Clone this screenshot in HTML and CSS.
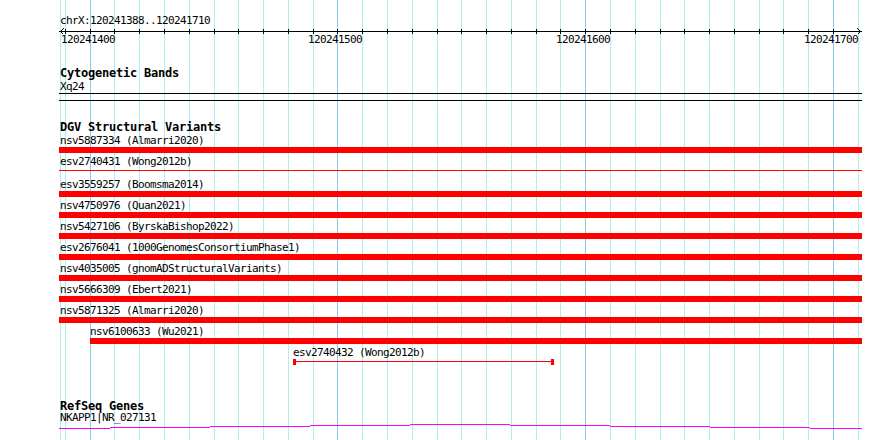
FILE: index.html
```html
<!DOCTYPE html>
<html>
<head>
  <meta charset="UTF-8">
  <title>chrX:120241388..120241710</title>
  <link rel="stylesheet" href="styles.css">
</head>
<body>

<div class="panel">

  <!-- grid lines every 10 bp, darker every 100 bp -->
  <svg class="grid" width="890" height="440" shape-rendering="crispEdges">
    <g fill="#afeeee">
      <rect x="60" y="0" width="1" height="440"/>
      <rect x="65" y="0" width="1" height="440"/>
      <rect x="114" y="0" width="1" height="440"/>
      <rect x="139" y="0" width="1" height="440"/>
      <rect x="164" y="0" width="1" height="440"/>
      <rect x="189" y="0" width="1" height="440"/>
      <rect x="214" y="0" width="1" height="440"/>
      <rect x="238" y="0" width="1" height="440"/>
      <rect x="263" y="0" width="1" height="440"/>
      <rect x="288" y="0" width="1" height="440"/>
      <rect x="313" y="0" width="1" height="440"/>
      <rect x="362" y="0" width="1" height="440"/>
      <rect x="387" y="0" width="1" height="440"/>
      <rect x="412" y="0" width="1" height="440"/>
      <rect x="437" y="0" width="1" height="440"/>
      <rect x="461" y="0" width="1" height="440"/>
      <rect x="486" y="0" width="1" height="440"/>
      <rect x="511" y="0" width="1" height="440"/>
      <rect x="536" y="0" width="1" height="440"/>
      <rect x="560" y="0" width="1" height="440"/>
      <rect x="610" y="0" width="1" height="440"/>
      <rect x="635" y="0" width="1" height="440"/>
      <rect x="660" y="0" width="1" height="440"/>
      <rect x="684" y="0" width="1" height="440"/>
      <rect x="709" y="0" width="1" height="440"/>
      <rect x="734" y="0" width="1" height="440"/>
      <rect x="759" y="0" width="1" height="440"/>
      <rect x="783" y="0" width="1" height="440"/>
      <rect x="808" y="0" width="1" height="440"/>
      <rect x="858" y="0" width="1" height="440"/>
    </g>
    <g fill="#87ceeb">
      <rect x="90" y="0" width="1" height="440"/>
      <rect x="337" y="0" width="1" height="440"/>
      <rect x="585" y="0" width="1" height="440"/>
      <rect x="833" y="0" width="1" height="440"/>
    </g>
  </svg>

  <div class="tracks">

    <!-- ruler -->
    <div class="label">chrX:120241388..120241710</div>
    <svg class="ruler" width="803" height="8" shape-rendering="crispEdges">
      <rect x="0" y="4" width="803" height="1" fill="#000"/>
      <g fill="#000">
        <rect x="6" y="2" width="1" height="5"/>
        <rect x="31" y="2" width="1" height="5"/>
        <rect x="55" y="2" width="1" height="5"/>
        <rect x="80" y="2" width="1" height="5"/>
        <rect x="105" y="2" width="1" height="5"/>
        <rect x="130" y="2" width="1" height="5"/>
        <rect x="155" y="2" width="1" height="5"/>
        <rect x="179" y="2" width="1" height="5"/>
        <rect x="204" y="2" width="1" height="5"/>
        <rect x="229" y="2" width="1" height="5"/>
        <rect x="254" y="2" width="1" height="5"/>
        <rect x="278" y="2" width="1" height="5"/>
        <rect x="303" y="2" width="1" height="5"/>
        <rect x="328" y="2" width="1" height="5"/>
        <rect x="353" y="2" width="1" height="5"/>
        <rect x="378" y="2" width="1" height="5"/>
        <rect x="402" y="2" width="1" height="5"/>
        <rect x="427" y="2" width="1" height="5"/>
        <rect x="452" y="2" width="1" height="5"/>
        <rect x="477" y="2" width="1" height="5"/>
        <rect x="501" y="2" width="1" height="5"/>
        <rect x="526" y="2" width="1" height="5"/>
        <rect x="551" y="2" width="1" height="5"/>
        <rect x="576" y="2" width="1" height="5"/>
        <rect x="601" y="2" width="1" height="5"/>
        <rect x="625" y="2" width="1" height="5"/>
        <rect x="650" y="2" width="1" height="5"/>
        <rect x="675" y="2" width="1" height="5"/>
        <rect x="700" y="2" width="1" height="5"/>
        <rect x="724" y="2" width="1" height="5"/>
        <rect x="749" y="2" width="1" height="5"/>
        <rect x="774" y="2" width="1" height="5"/>
      </g>
      <path d="M4.5 1.5 L1.5 4.5 L4.5 7.5" fill="none" stroke="#000" stroke-width="1"/>
      <path d="M798.5 1.5 L801.5 4.5 L798.5 7.5" fill="none" stroke="#000" stroke-width="1"/>
    </svg>
    <div class="ticks label">
      <span style="left:2px">120241400</span>
      <span style="left:249px">120241500</span>
      <span style="left:497px">120241600</span>
      <span style="left:745px">120241700</span>
    </div>

    <!-- cytogenetic bands -->
    <div class="title cyto-title">Cytogenetic Bands</div>
    <div class="label cyto-label">Xq24</div>
    <div class="band"></div>

    <!-- DGV -->
    <div class="title dgv-title">DGV Structural Variants</div>

    <div class="row">
      <div class="label">nsv5887334 (Almarri2020)</div>
      <div class="bar"></div>
    </div>
    <div class="row">
      <div class="label">esv2740431 (Wong2012b)</div>
      <div class="bar thin"></div>
    </div>
    <div class="row">
      <div class="label">esv3559257 (Boomsma2014)</div>
      <div class="bar"></div>
    </div>
    <div class="row">
      <div class="label">nsv4750976 (Quan2021)</div>
      <div class="bar"></div>
    </div>
    <div class="row">
      <div class="label">nsv5427106 (ByrskaBishop2022)</div>
      <div class="bar"></div>
    </div>
    <div class="row">
      <div class="label">esv2676041 (1000GenomesConsortiumPhase1)</div>
      <div class="bar"></div>
    </div>
    <div class="row">
      <div class="label">nsv4035005 (gnomADStructuralVariants)</div>
      <div class="bar"></div>
    </div>
    <div class="row">
      <div class="label">nsv5666309 (Ebert2021)</div>
      <div class="bar"></div>
    </div>
    <div class="row">
      <div class="label">nsv5871325 (Almarri2020)</div>
      <div class="bar"></div>
    </div>
    <div class="row">
      <div class="label" style="margin-left:30px">nsv6100633 (Wu2021)</div>
      <div class="bar" style="margin-left:31px"></div>
    </div>
    <div class="row">
      <div class="label" style="margin-left:233px">esv2740432 (Wong2012b)</div>
      <div class="span" style="margin-left:234px; width:261px">
        <div class="cap"></div>
        <div class="link"></div>
        <div class="cap"></div>
      </div>
    </div>

    <!-- RefSeq -->
    <div class="title gene-title">RefSeq Genes</div>
    <div class="label gene-label">NKAPP1|NR_027131</div>
    <svg class="gene" width="803" height="6" shape-rendering="crispEdges">
      <g fill="#ff00ff">
        <rect x="0" y="5" width="51" height="1"/>
        <rect x="51" y="4" width="100" height="1"/>
        <rect x="151" y="3" width="100" height="1"/>
        <rect x="251" y="2" width="100" height="1"/>
        <rect x="351" y="1" width="100" height="1"/>
        <rect x="451" y="2" width="100" height="1"/>
        <rect x="551" y="3" width="100" height="1"/>
        <rect x="651" y="4" width="100" height="1"/>
        <rect x="751" y="5" width="52" height="1"/>
      </g>
    </svg>

  </div>
</div>

</body>
</html>
```

FILE: styles.css
```css
body {
  margin: 0;
  background-color: #fff;
  color: #000;
  font-family: "DejaVu Sans Mono", "Liberation Mono", monospace;
}
.panel {
  position: relative;
  width: 890px;
  height: 440px;
  overflow: hidden;
}
.grid {
  position: absolute;
  left: 0;
  top: 0;
}
.tracks {
  position: relative;
  margin-left: 59px;
  width: 803px;
  padding-top: 15px;
}
.label {
  font-size: 11px;
  line-height: 12px;
  height: 12px;
  letter-spacing: -0.62px;
  white-space: nowrap;
  padding-left: 1px;
}
.title {
  font-size: 12px;
  font-weight: bold;
  line-height: 13px;
  letter-spacing: -0.22px;
  white-space: nowrap;
  padding-left: 1px;
}
.ruler {
  display: block;
  overflow: visible;
}
.ticks {
  position: relative;
  margin-top: -1px;
}
.ticks span {
  position: absolute;
  top: 0;
}
.cyto-title {
  margin-top: 21px;
}
.cyto-label {
  margin-top: 1px;
}
.band {
  height: 6px;
  border-top: 1px solid #000;
  border-bottom: 1px solid #000;
}
.dgv-title {
  margin-top: 20px;
  margin-bottom: 1px;
}
.row {
  margin-bottom: 3px;
}
.bar {
  height: 6px;
  background-color: red;
}
.bar.thin {
  background: none;
}
.bar.thin::after {
  content: "";
  display: block;
  height: 1px;
  margin-top: 2px;
  background-color: red;
}
.span {
  display: flex;
  height: 6px;
}
.cap {
  width: 3px;
  height: 6px;
  background-color: red;
}
.link {
  flex: 1;
  height: 1px;
  margin-top: 2px;
  background-color: red;
}
.gene-title {
  margin-top: 35px;
  line-height: 12px;
}
.gene-label {
  line-height: 11px;
  height: 11px;
}
.gene {
  display: block;
}
```
